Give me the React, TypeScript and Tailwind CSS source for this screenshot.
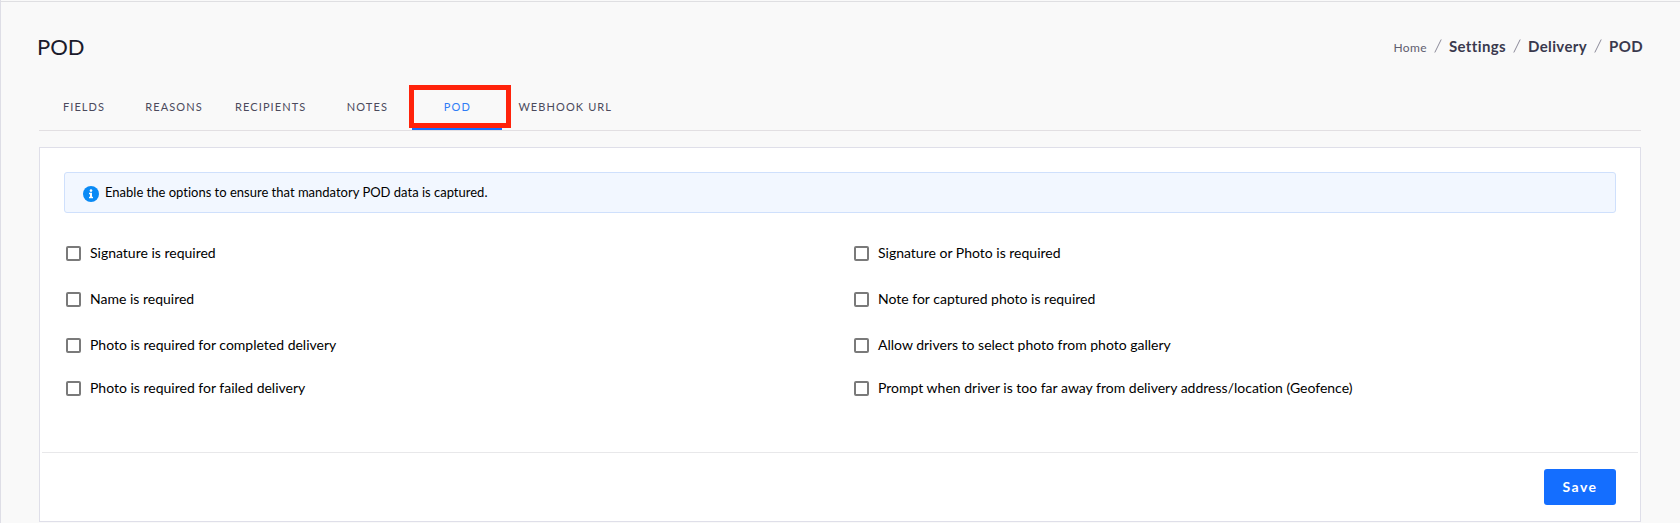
import { useState } from 'react';
import clsx from 'clsx';

interface Option {
    id: string;
    label: string;
}

const TABS = ['Fields', 'Reasons', 'Recipients', 'Notes', 'POD', 'Webhook URL'];

const BREADCRUMBS = ['Settings', 'Delivery', 'POD'];

// Listed row by row, left column first
const OPTIONS: Option[] = [
    { id: 'signature', label: 'Signature is required' },
    { id: 'signature-or-photo', label: 'Signature or Photo is required' },
    { id: 'name', label: 'Name is required' },
    { id: 'photo-note', label: 'Note for captured photo is required' },
    { id: 'photo-completed', label: 'Photo is required for completed delivery' },
    { id: 'photo-gallery', label: 'Allow drivers to select photo from photo gallery' },
    { id: 'photo-failed', label: 'Photo is required for failed delivery' },
    { id: 'geofence', label: 'Prompt when driver is too far away from delivery address/location (Geofence)' }
];

const InfoIcon = () => (
    <svg viewBox="0 0 16 16" className="mt-0.5 size-4 shrink-0" aria-hidden="true">
        <circle cx="8" cy="8" r="8" fill="#0a8af5" />
        <circle cx="8" cy="4.6" r="1.3" fill="#fff" />
        <path d="M6 6.8h3v3.9h1v1.5H6v-1.5h1V8.3H6z" fill="#fff" />
    </svg>
);

const Breadcrumb = () => (
    <nav aria-label="Breadcrumb">
        <ol className="flex items-center text-[15px] font-bold tracking-wide text-[#3a394e]">
            <li>
                <a href="#home" className="text-xs font-normal text-[#5f5e70]">Home</a>
            </li>
            {BREADCRUMBS.map((crumb) => (
                <li key={crumb} className="flex items-center">
                    <svg viewBox="0 0 8 14" className="mx-[7px] h-3.5 w-2" aria-hidden="true">
                        <path d="M7.2 .5.8 13.5" stroke="#8b8a99" fill="none" />
                    </svg>
                    <a href={`#${crumb.toLowerCase()}`}>{crumb}</a>
                </li>
            ))}
        </ol>
    </nav>
);

interface TabBarProps {
    active: string;
    onChange: (tab: string) => void;
}

const TabBar = ({ active, onChange }: TabBarProps) => (
    <div role="tablist" className="flex border-b border-[#e2dfe2]">
        {TABS.map((tab) => (
            <button
                key={tab}
                type="button"
                role="tab"
                aria-selected={tab === active}
                onClick={() => onChange(tab)}
                className={clsx(
                    'relative h-12 min-w-[90px] border-b-2 px-4 pt-1 text-[11px] uppercase tracking-widest',
                    tab === active ? 'border-[#146eff] text-[#2f7df6]' : 'border-transparent text-[#4b4a5c]'
                )}
            >
                {tab}
                {tab === active && (
                    <span className="absolute -left-[3px] -right-[9px] top-[3px] bottom-0 border-5 border-[#ff230b]" />
                )}
            </button>
        ))}
    </div>
);

export default function App() {
    const [activeTab, setActiveTab] = useState('POD');
    const [checked, setChecked] = useState<Record<string, boolean>>({});

    const toggle = (id: string) => {
        setChecked(prev => ({ ...prev, [id]: !prev[id] }));
    };

    return (
        <div className="min-h-screen border-l border-[#dedee6] bg-[#f9f9f9] pt-px font-['Lato','Liberation_Sans',sans-serif] text-black [font-variant-ligatures:none]">
            <main className="border-t border-[#dfdfe2] pr-[39px] pl-[38px]">
                <header className="-mx-0.5 flex h-20 items-center justify-between pt-2">
                    <h1 className="text-[22px] text-[#1b1b2c]">POD</h1>
                    <Breadcrumb />
                </header>

                <TabBar active={activeTab} onChange={setActiveTab} />

                <form
                    className="mt-4 border border-[#dfdfe9] bg-white"
                    onSubmit={(e) => e.preventDefault()}
                >
                    <div className="px-6 pt-6 pb-11">
                        <div className="flex h-[41px] items-center gap-1.5 rounded-[3px] border border-[#cfe0fc] bg-[#f2f7ff] px-[18px]">
                            <InfoIcon />
                            <p className="text-[13px]">Enable the options to ensure that mandatory POD data is captured.</p>
                        </div>

                        <div className="mt-[17px] grid grid-cols-2 gap-x-6">
                            {OPTIONS.map(({ id, label }) => (
                                <div key={id} className="flex h-[46px] items-center gap-[9px] pl-0.5 nth-[n+7]:h-10">
                                    <input
                                        id={id}
                                        type="checkbox"
                                        checked={!!checked[id]}
                                        onChange={() => toggle(id)}
                                        className="size-[15px] shrink-0 appearance-none rounded-[2px] border-2 border-[#7a7a7a] bg-white checked:bg-[#146eff]"
                                    />
                                    <label htmlFor={id} className="text-sm">{label}</label>
                                </div>
                            ))}
                        </div>
                    </div>

                    <div className="mx-0.5 flex justify-end border-t border-[#e8e8ea] px-[22px] py-4">
                        <button
                            type="submit"
                            className="h-9 w-[72px] rounded-[3px] bg-[#146eff] text-sm font-bold tracking-widest text-white"
                        >
                            Save
                        </button>
                    </div>
                </form>
            </main>
        </div>
    );
}
